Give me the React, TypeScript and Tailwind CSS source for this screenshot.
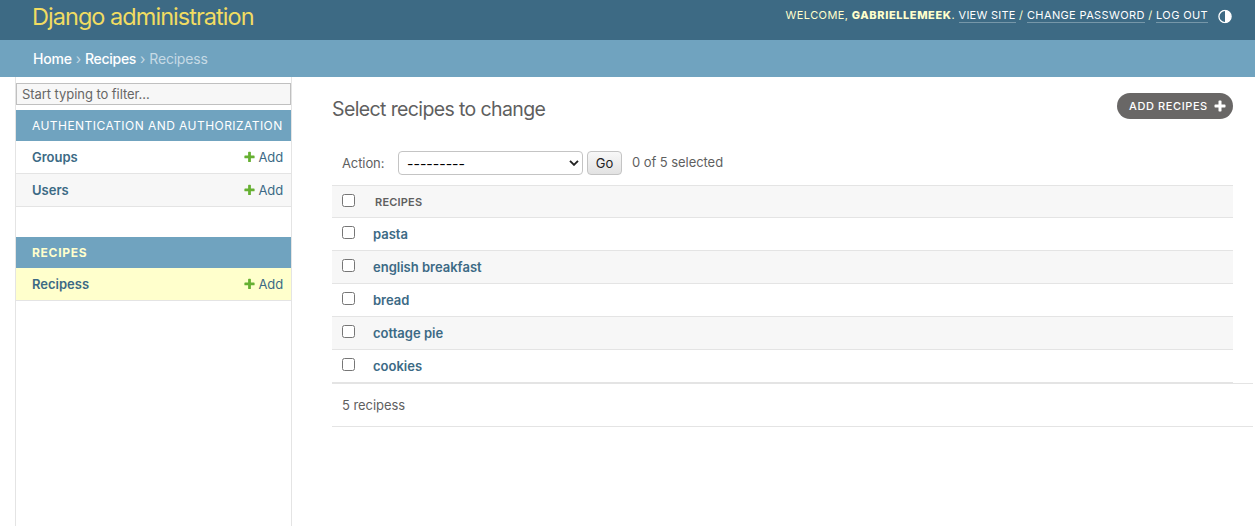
import React from "react";

const PLUS = "M1600 796v192q0 40-28 68t-68 28h-416v416q0 40-28 68t-68 28h-192q-40 0-68-28t-28-68v-416h-416q-40 0-68-28t-28-68v-192q0-40 28-68t68-28h416v-416q0-40 28-68t68-28h192q40 0 68 28t28 68v416h416q40 0 68 28t28 68z";

function Plus({ className }: { className: string }) {
  return (
    <svg viewBox="0 0 1792 1792" className={className} fill="currentColor" aria-hidden="true">
      <path d={PLUS} />
    </svg>
  );
}

function ModelRow({ name, className }: { name: string; className: string }) {
  return (
    <div className={`flex h-[33px] items-center justify-between border-b border-[#e4e4e4] pt-[2px] pl-4 pr-2 text-[13px] text-[#3c6a85] ${className}`}>
      <a href="#" className="font-semibold">{name}</a>
      <a href="#" className="flex items-center">
        <Plus className="mr-[2px] size-[13px] -translate-y-[1.5px] text-[#66b032]" />
        <span className="tracking-[-0.1px]">Add</span>
      </a>
    </div>
  );
}

function Check() {
  return (
    <input
      type="checkbox"
      className="block size-[13px] shrink-0 appearance-none rounded-[2.5px] border border-[#767676] bg-white"
    />
  );
}

const recipes = ["pasta", "english breakfast", "bread", "cottage pie", "cookies"];

const userLink = "border-b border-[#7697a9] text-white tracking-[0.37px]";

export default function App() {
  return (
    <div className="flex h-[526px] w-[1255px] flex-col overflow-hidden bg-white font-['Inter',sans-serif] text-[13px] text-[#5f5f5f]">
      <header className="flex h-10 shrink-0 justify-between bg-[#3d6a84] pl-[32px] pr-[23px]">
        <h1 className="pt-[1px] text-[23.5px] leading-8 font-normal tracking-[-0.96px] text-[#f1dc62]">Django administration</h1>
        <div className="flex h-[31px] items-center text-[11px] tracking-[0.4px] text-[#ffffcc]">
          <div className="whitespace-pre leading-[13px]">
            WELCOME, <strong className="font-extrabold tracking-[0.6px]">GABRIELLEMEEK</strong>.{" "}
            <a href="#" className="border-b border-[#7697a9] tracking-[0.25px] text-white">VIEW SITE</a> / <a href="#" className={userLink}>CHANGE PASSWORD</a> /{" "}
            <a href="#" className={userLink}>LOG OUT</a>
          </div>
          <svg viewBox="0 0 14 14" className="ml-[10px] size-[14px] translate-y-[0.5px]">
            <circle cx="7" cy="7" r="6.1" fill="none" stroke="#fff" strokeWidth="1.3" />
            <path d="M7 1a6 6 0 0 1 0 12z" fill="#fff" />
          </svg>
        </div>
      </header>
      <nav className="flex h-[37px] shrink-0 items-center whitespace-pre bg-[#70a3bf] pl-[33px] text-[14px] text-[#c6dae5]">
        <a href="#" className="font-medium tracking-[-0.2px] text-white">Home</a>
        <span> › </span>
        <a href="#" className="font-medium tracking-[-0.3px] text-white">Recipes</a>
        <span> › </span>
        <span className="tracking-[-0.2px]">Recipess</span>
      </nav>
      <div className="flex min-h-0 flex-1">
        <aside className="ml-[15px] w-[277px] shrink-0 border-x border-[#e4e4e4] pt-[6px]">
          <input
            type="text"
            placeholder="Start typing to filter..."
            className="block h-[22px] w-full border border-[#c0c0c0] bg-[#f7f7f7] px-[5px] text-[13px] tracking-[-0.06px] placeholder:text-[#666]"
          />
          <h2 className="mt-[5px] flex h-[31px] items-center whitespace-nowrap bg-[#70a3bf] pl-4 text-[12px] tracking-[0.45px] text-white">
            AUTHENTICATION AND AUTHORIZATION
          </h2>
          <ModelRow name="Groups" className="bg-white" />
          <ModelRow name="Users" className="bg-[#f7f7f7]" />
          <h2 className="mt-[30px] flex h-[31px] items-center bg-[#70a3bf] pl-4 text-[12px] font-bold tracking-[0.7px] text-[#ffffcc]">
            RECIPES
          </h2>
          <ModelRow name="Recipess" className="bg-[#ffffcc]" />
        </aside>
        <main className="flex-1 pl-10 pr-[2px] pt-4">
          <div className="flex h-[58px] items-start justify-between pr-5">
            <h2 className="text-[19.5px] leading-8 font-normal tracking-[-0.62px]">Select recipes to change</h2>
            <a href="#" className="flex h-[26px] w-[116px] items-center rounded-full bg-[#696766] pl-3 text-[11px] font-medium tracking-[0.6px] text-white">
              <span>ADD RECIPES</span>
              <Plus className="ml-[5px] size-[14px]" />
            </a>
          </div>
          <div className="flex h-6 items-center pl-[10px]">
            <label className="w-14 translate-y-px tracking-[-0.1px]">Action:</label>
            <div className="flex h-6 w-[185px] items-center justify-between rounded-[4px] border border-[#c4c4c4] bg-white pl-2 pr-[3px] text-black">
              <span className="text-[14px]">---------</span>
              <svg viewBox="0 0 10 6" className="h-[6px] w-[10px]" fill="none" stroke="#222" strokeWidth="1.9">
                <path d="M1 0.8l4 4 4-4" />
              </svg>
            </div>
            <button className="ml-1 h-6 w-[35px] rounded-[4px] border border-[#c4c4c4] bg-linear-to-b from-[#f8f8f8] to-[#e2e2e2] pt-px text-[13px] text-[#222]">Go</button>
            <span className="ml-[10px] tracking-[-0.06px]">0 of 5 selected</span>
          </div>
          <div className="mr-5 mt-[10px] border-t border-[#e4e4e4]">
            <div className="flex h-8 items-center border-b border-[#e4e4e4] bg-[#f7f7f7] pl-[10px]">
              <div className="-mt-[2px]"><Check /></div>
              <span className="ml-5 pt-px text-[11px] font-semibold tracking-[0.2px]">RECIPES</span>
            </div>
            {recipes.map((name, i) => (
              <div key={name} className={`flex h-[33px] items-center border-b border-[#e4e4e4] pl-[10px] ${i % 2 ? "bg-[#f7f7f7]" : "bg-white"}`}>
                <div className="-mt-[3px]"><Check /></div>
                <a href="#" className="ml-[18px] pt-[2px] font-semibold text-[#3c6a85]">{name}</a>
              </div>
            ))}
          </div>
          <p className="flex h-11 items-center border-y border-[#e4e4e4] pt-[2px] pl-[10px] tracking-[-0.06px]">5 recipess</p>
        </main>
      </div>
    </div>
  );
}
